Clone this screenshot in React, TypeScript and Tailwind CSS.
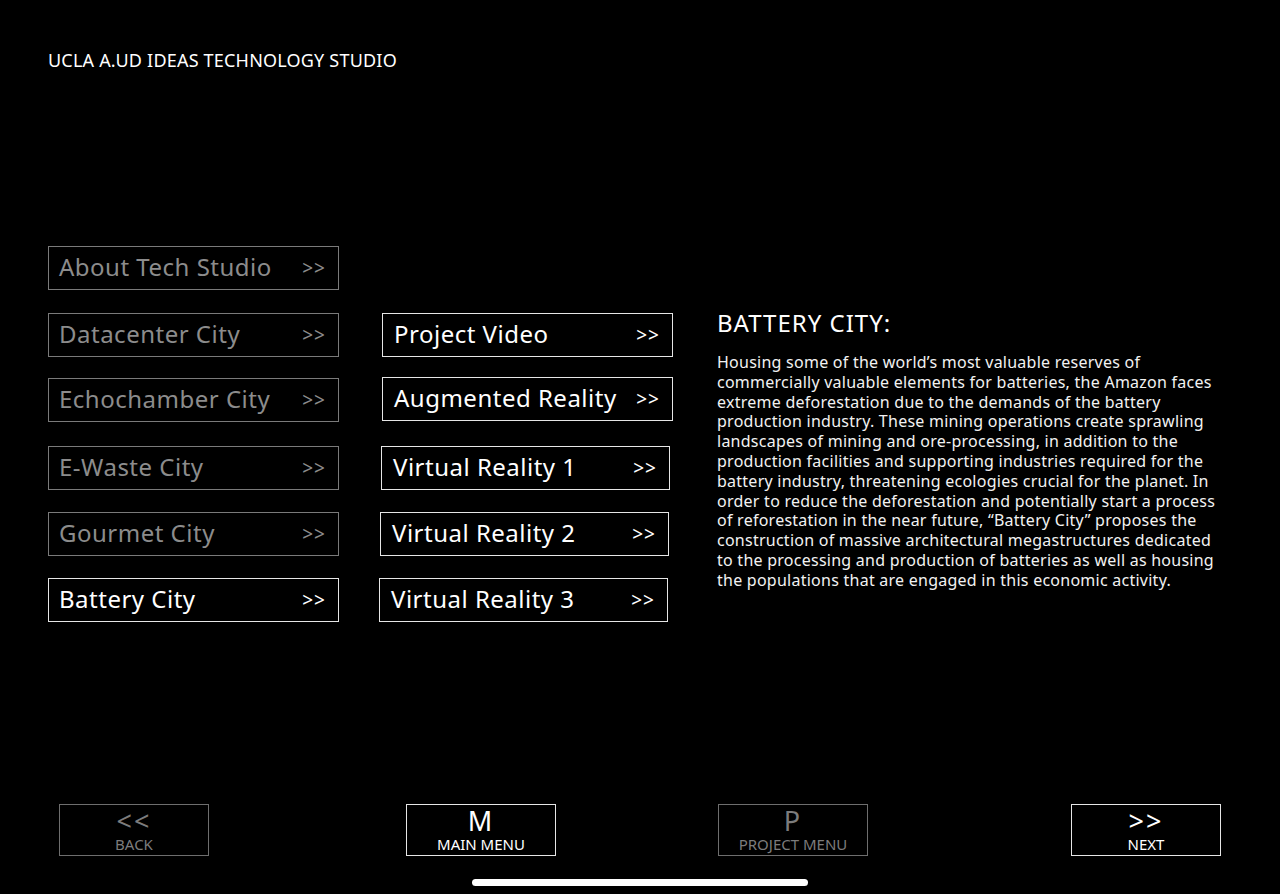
import * as React from "react";

const FONT = "font-['Noto_Sans',_'DejaVu_Sans',_sans-serif]";

// mt = ecart au-dessus de chaque bouton (le visuel d'origine n'est pas tout a fait regulier)
const cities = [
  { label: "About Tech Studio", active: false, cls: "" },
  { label: "Datacenter City", active: false, cls: "mt-[23px]" },
  { label: "Echochamber City", active: false, cls: "mt-[21px]" },
  { label: "E-Waste City", active: false, cls: "mt-[24px]" },
  { label: "Gourmet City", active: false, cls: "mt-[22px]" },
  { label: "Battery City", active: true, cls: "mt-[22px]" },
];

const projects = [
  { label: "Project Video", cls: "w-[291px]" },
  { label: "Augmented Reality", cls: "mt-[20px] w-[291px]" },
  { label: "Virtual Reality 1", cls: "mt-[25px] -ml-[1px] w-[289px]" },
  { label: "Virtual Reality 2", cls: "mt-[22px] -ml-[2px] w-[289px]" },
  { label: "Virtual Reality 3", cls: "mt-[22px] -ml-[3px] w-[289px]" },
];

const body = [
  "Housing some of the world’s most valuable reserves of",
  "commercially valuable elements for batteries, the Amazon faces",
  "extreme deforestation due to the demands of the battery",
  "production industry. These mining operations create sprawling",
  "landscapes of mining and ore-processing, in addition to the",
  "production facilities and supporting industries required for the",
  "battery industry, threatening ecologies crucial for the planet. In",
  "order to reduce the deforestation and potentially start a process",
  "of reforestation in the near future, “Battery City” proposes the",
  "construction of massive architectural megastructures dedicated",
  "to the processing and production of batteries as well as housing",
  "the populations that are engaged in this economic activity.",
];

function MenuButton({ label, active, className = "" }: { label: string; active: boolean; className?: string }) {
  return (
    <div
      className={
        "flex h-[44px] items-center justify-between border pl-[10px] pr-[12px] text-[24px] leading-none tracking-[0.5px] " +
        (active ? "border-[#e6e6e6] text-white " : "border-[#7a7a7a] text-[#8c8c8c] ") +
        className
      }
    >
      <span className="pb-[2px]">{label}</span>
      <span className="text-[19px] tracking-[1px]">&gt;&gt;</span>
    </div>
  );
}

function NavButton({ glyph, label, active }: { glyph: string; label: string; active: boolean }) {
  return (
    <div
      className={
        "flex h-[52px] w-[150px] flex-col items-center justify-center border " +
        (active ? "border-[#e6e6e6] text-white" : "border-[#6e6e6e] text-[#7c7c7c]")
      }
    >
      <span className="text-[27px] leading-[28px] tracking-[2px]">{glyph}</span>
      <span className="text-[15px] leading-[18px]">{label}</span>
    </div>
  );
}

export default function App() {
  return (
    <div className={"relative flex h-[894px] w-[1280px] flex-col overflow-hidden bg-black text-white " + FONT}>
      <header className="pl-[48px] pt-[49px] text-[18px] leading-[22px] tracking-[0.2px]">
        UCLA A.UD IDEAS TECHNOLOGY STUDIO
      </header>

      <main className="mt-[175px] flex pl-[48px]">
        {/* colonne des villes */}
        <div className="flex w-[291px] flex-col">
          {cities.map((c) => (
            <MenuButton key={c.label} label={c.label} active={c.active} className={c.cls} />
          ))}
        </div>

        {/* colonne des projets */}
        <div className="ml-[43px] flex flex-col pt-[67px]">
          {projects.map((p) => (
            <MenuButton key={p.label} label={p.label} active className={"pl-[11px] " + p.cls} />
          ))}
        </div>

        {/* description */}
        <section className="ml-[44px] w-[515px] pt-[62px]">
          <h2 className="text-[24px] leading-[30px] tracking-[1px]">BATTERY CITY:</h2>
          <p className="mt-[15px] text-[16px] leading-[19.8px] tracking-[0.25px] text-[#f2f2f2]">
            {body.map((line) => (
              <span key={line} className="block whitespace-nowrap">
                {line}
              </span>
            ))}
          </p>
        </section>
      </main>

      <footer className="mt-auto mb-[38px] flex pl-[59px]">
        <NavButton glyph="<<" label="BACK" active={false} />
        <div className="ml-[197px]">
          <NavButton glyph="M" label="MAIN MENU" active />
        </div>
        <div className="ml-[162px]">
          <NavButton glyph="P" label="PROJECT MENU" active={false} />
        </div>
        <div className="ml-[203px]">
          <NavButton glyph=">>" label="NEXT" active />
        </div>
      </footer>

      <div className="absolute bottom-[8px] left-[472px] h-[7px] w-[336px] rounded-full bg-white" />
    </div>
  );
}
